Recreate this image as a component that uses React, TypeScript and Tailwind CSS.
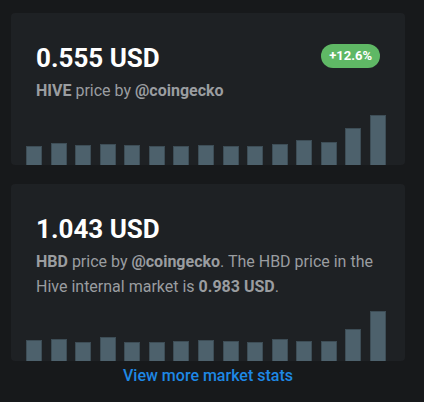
import React from 'react';

interface PriceCardProps {
  price: string;
  change?: string;
  bars: number[];
  children: React.ReactNode;
}

const hiveBars = [19, 21.7, 19.7, 21, 20, 19.3, 18.7, 19.7, 19, 19.3, 21.3, 24.7, 23.3, 37.3, 50];
const hbdBars = [21, 22, 19.3, 23.7, 18.7, 18.7, 20.3, 21.3, 19.7, 19, 21.7, 19.7, 19.7, 32.3, 50];

const PriceCard: React.FC<PriceCardProps> = ({ price, change, bars, children }) => {
  return (
    <div className="bg-[#1e2124] rounded-[4px] pt-[29px] overflow-hidden">
      <div className="flex items-start justify-between pl-[25px] pr-[25px]">
        <h2 className="text-[26px] leading-[32px] font-bold text-white">{price}</h2>
        {change && (
          <span className="mt-[2px] h-[24px] px-[8px] rounded-full bg-[#5fb865] text-white text-[13px] font-bold leading-[24px]">
            {change}
          </span>
        )}
      </div>
      <p className="mt-[4px] pl-[25px] pr-[25px] text-[16px] leading-[25px] text-[#9a9da0]">{children}</p>
      {/* mini price chart */}
      <div className="mt-[12px] ml-[15px] w-[360px] h-[50px] flex items-end justify-between">
        {bars.map((h, i) => (
          <div
            key={i}
            className="w-[16px] bg-[#4d616c] border border-b-0 border-[#3d4d56]"
            style={{ height: `${h}px` }}
          />
        ))}
      </div>
    </div>
  );
};

export default function App() {
  return (
    <div className="w-[424px] h-[402px] bg-[#17191b] pt-[13px] pl-[11px] pr-[19px]" style={{ fontFamily: 'Roboto, "Liberation Sans", sans-serif' }}>
      <PriceCard price="0.555 USD" change="+12.6%" bars={hiveBars}>
        <b className="font-bold">HIVE</b> price by <b className="font-bold">@coingecko</b>
      </PriceCard>
      <div className="h-[19px]" />
      <PriceCard price="1.043 USD" bars={hbdBars}>
        <b className="font-bold">HBD</b> price by <b className="font-bold">@coingecko</b>. The HBD price in the Hive internal market is{' '}
        <b className="font-bold">0.983 USD</b>.
      </PriceCard>
      <div className="text-center mt-[3px]">
        <a className="text-[16px] leading-[20px] font-medium text-[#1e88e5] cursor-pointer">View more market stats</a>
      </div>
    </div>
  );
}
